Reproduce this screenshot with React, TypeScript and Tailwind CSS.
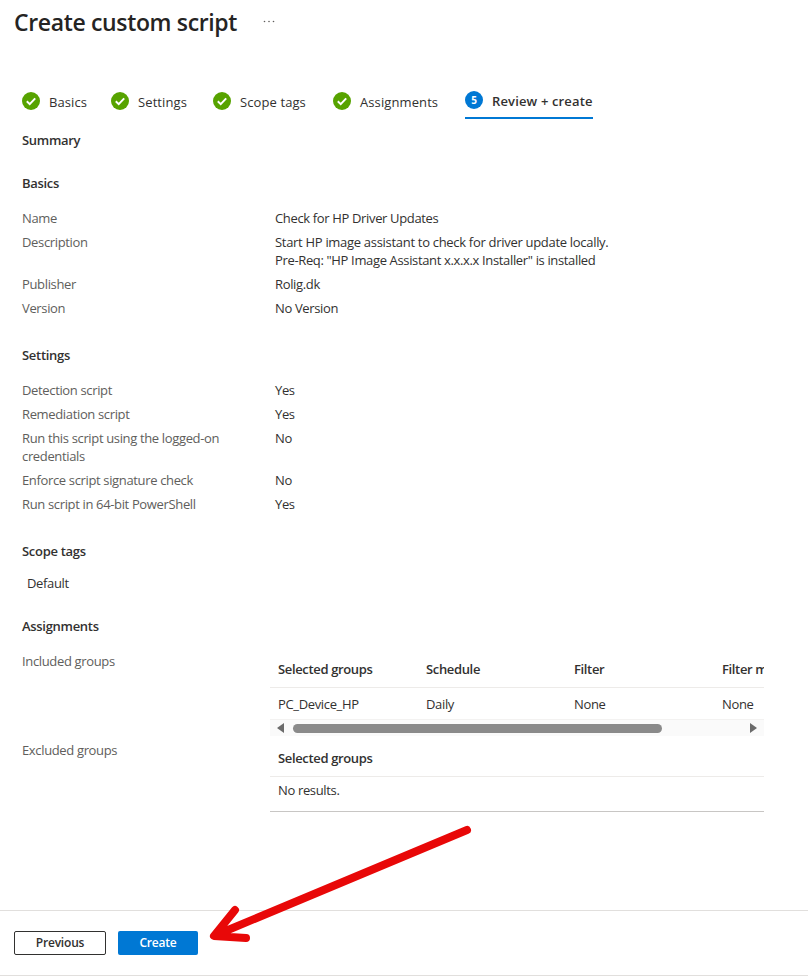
const FONT = "font-['Open_Sans','Noto_Sans',sans-serif]";

function DoneIcon() {
  return (
    <svg width="18" height="18" viewBox="0 0 18 18" className="shrink-0 -mt-[1px]">
      <circle cx="9" cy="9" r="9" fill="#57a300" />
      <path d="M4.8 9.3 L7.7 12.1 L13.2 6.4" fill="none" stroke="#fff" strokeWidth="2" />
    </svg>
  );
}

function Step({ label, width }: { label: string; width: string }) {
  return (
    <div className={`flex items-center gap-[9px] h-[36px] ${width}`}>
      <DoneIcon />
      <span className="pt-[2px] text-[13px] leading-[18px] text-[#323130] tracking-[0.1px] whitespace-nowrap">{label}</span>
    </div>
  );
}

function Row({ label, children }: { label: string; children: React.ReactNode }) {
  return (
    <div className="grid grid-cols-[253px_1fr] py-[3px] text-[13px] leading-[18px] tracking-[-0.35px]">
      <div className="text-[#605e5c] pr-[40px]">{label}</div>
      <div className="text-[#323130]">{children}</div>
    </div>
  );
}

function Heading({ children }: { children: React.ReactNode }) {
  return <h2 className="text-[13px] leading-[18px] font-semibold text-[#323130] tracking-[-0.3px] mb-[14px]">{children}</h2>;
}

export default function App() {
  return (
    <div className={`relative w-[808px] h-[977px] overflow-hidden bg-white ${FONT}`}>
      {/* Title */}
      <div className="flex items-center h-[47px] pl-[14px] pb-[4px]">
        <h1 className="text-[23px] leading-[30px] font-semibold text-[#252423] tracking-[-0.35px]">Create custom script</h1>
        <svg width="12" height="3" viewBox="0 0 12 3" className="ml-[26px]">
          <circle cx="1.5" cy="1.5" r="0.8" fill="#605e5c" />
          <circle cx="6" cy="1.5" r="0.8" fill="#605e5c" />
          <circle cx="10.5" cy="1.5" r="0.8" fill="#605e5c" />
        </svg>
      </div>

      {/* Wizard tabs */}
      <div className="flex pl-[22px] mt-[36px]">
        <Step label="Basics" width="w-[89px]" />
        <Step label="Settings" width="w-[102px]" />
        <Step label="Scope tags" width="w-[120px]" />
        <Step label="Assignments" width="w-[132px]" />
        <div className="flex items-center gap-[9px] h-[36px] w-[128px] border-b-2 border-[#0078d4]">
          <span className="flex items-center justify-center w-[18px] h-[18px] rounded-full bg-[#0078d4] text-white text-[10px] font-bold leading-none">5</span>
          <span className="pt-[2px] text-[13px] leading-[18px] font-semibold text-[#323130] tracking-[0.15px] whitespace-nowrap">Review + create</span>
        </div>
      </div>

      <div className="pl-[22px] pt-[12px]">
        <div className="text-[13px] leading-[18px] font-semibold text-[#323130] tracking-[-0.3px] mb-[25px]">Summary</div>

        <Heading>Basics</Heading>
        <Row label="Name">Check for HP Driver Updates</Row>
        <Row label="Description">
          <span className="tracking-[-0.3px]">Start HP image assistant to check for driver update locally.</span>
          <br />
          Pre-Req: "HP Image Assistant x.x.x.x Installer" is installed
        </Row>
        <Row label="Publisher">Rolig.dk</Row>
        <Row label="Version">No Version</Row>

        <div className="h-[26px]" />
        <Heading>Settings</Heading>
        <Row label="Detection script">Yes</Row>
        <Row label="Remediation script">Yes</Row>
        <Row label="Run this script using the logged-on credentials">No</Row>
        <Row label="Enforce script signature check">No</Row>
        <Row label="Run script in 64-bit PowerShell">Yes</Row>

        <div className="h-[26px]" />
        <Heading>Scope tags</Heading>
        <div className="pl-[5px] pb-[3px] text-[13px] leading-[18px] text-[#323130] tracking-[-0.35px]">Default</div>

        <div className="h-[22px]" />
        <Heading>Assignments</Heading>

        {/* Included groups */}
        <div className="flex h-[89px] text-[13px] leading-[18px] tracking-[-0.35px]">
          <div className="w-[248px] pt-[3px] text-[#605e5c]">Included groups</div>
          <div className="w-[494px] overflow-hidden">
            <div className="grid grid-cols-[148px_148px_148px_148px] w-[600px] pl-[8px] pt-[11px] h-[39px] border-b border-[#edebe9] font-semibold text-[#323130] whitespace-nowrap">
              <div>Selected groups</div>
              <div>Schedule</div>
              <div>Filter</div>
              <div>Filter mode</div>
            </div>
            <div className="grid grid-cols-[148px_148px_148px_148px] w-[600px] pl-[8px] pt-[7px] h-[32px] border-b border-[#f3f2f1] text-[#323130]">
              <div>PC_Device_HP</div>
              <div>Daily</div>
              <div>None</div>
              <div>None</div>
            </div>
            {/* Scrollbar */}
            <div className="flex items-center h-[16px] bg-[#fafafa] pl-[7px] w-[494px]">
              <div className="w-0 h-0 border-y-[5px] border-y-transparent border-r-[7px] border-r-[#6b6b6b]" />
              <div className="ml-[9px] w-[369px] h-[9px] rounded-full bg-[#8a8a8a]" />
              <div className="ml-[88px] w-0 h-0 border-y-[5px] border-y-transparent border-l-[7px] border-l-[#6b6b6b]" />
            </div>
          </div>
        </div>

        {/* Excluded groups */}
        <div className="flex text-[13px] leading-[18px] tracking-[-0.35px]">
          <div className="w-[248px] pt-[3px] text-[#605e5c]">Excluded groups</div>
          <div className="w-[494px]">
            <div className="pl-[8px] pt-[11px] h-[39px] border-b border-[#edebe9] font-semibold text-[#323130]">Selected groups</div>
            <div className="pl-[8px] pt-[4px] h-[35px] border-b border-[#c8c6c4] text-[#323130]">No results.</div>
          </div>
        </div>
      </div>

      {/* Footer */}
      <div className="absolute left-0 right-0 top-[910px] h-[66px] border-y border-[#e1dfdd] pt-[20px] pl-[14px] flex gap-[12px] items-start">
        <button className="w-[92px] h-[24px] rounded-[2px] border border-[#323130] bg-white text-[12px] font-semibold text-[#323130] tracking-[-0.2px]">Previous</button>
        <button className="w-[80px] h-[24px] rounded-[2px] bg-[#0078d4] text-[12px] font-semibold text-white tracking-[-0.2px]">Create</button>
      </div>

      {/* Red annotation arrow */}
      <svg width="808" height="977" viewBox="0 0 808 977" className="absolute left-0 top-0 pointer-events-none">
        <path d="M467 830 L216 935 M235 910 L214 936 L246 938" fill="none" stroke="#e80808" strokeWidth="8" strokeLinecap="round" strokeLinejoin="round" />
      </svg>
    </div>
  );
}
